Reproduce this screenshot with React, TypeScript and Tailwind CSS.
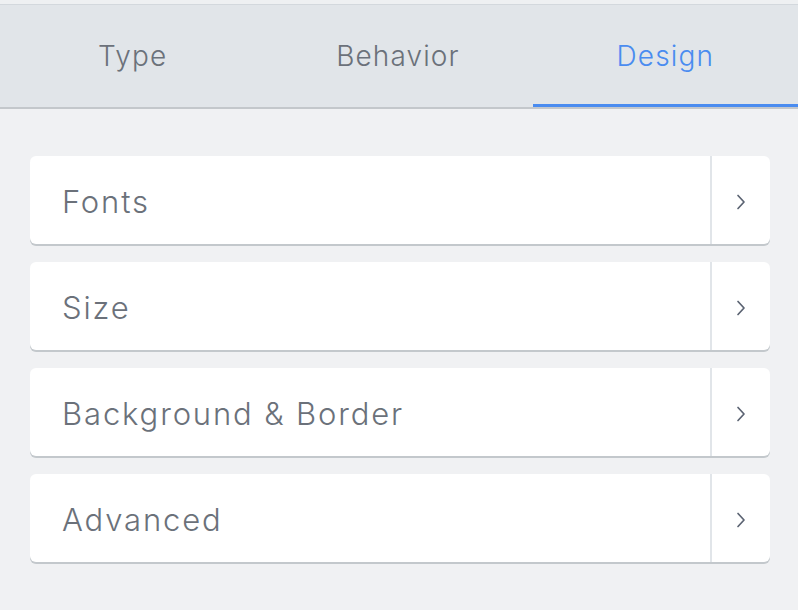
const tabs = ["Type", "Behavior", "Design"];
const sections = ["Fonts", "Size", "Background & Border", "Advanced"];

const Chevron = () => (
  <svg width="12" height="18" viewBox="0 0 12 18" fill="none" className="text-[#5b6372]">
    <path d="M3 2.5 L9 9 L3 15.5" stroke="currentColor" strokeWidth="1.7" strokeLinecap="round" strokeLinejoin="round" />
  </svg>
);

const App = () => {
  return (
    <main
      className="min-h-[610px] w-[798px] bg-[#f0f1f3]"
      style={{ fontFamily: "Inter, 'Noto Sans', sans-serif" }}
    >
      {/* Tabs */}
      <div className="border-t-4 border-[#eef0f2]">
        <div className="flex h-[105px] border-t border-[#d3d8dd] border-b-2 border-b-[#c3c7cb] bg-[#e1e5e9]">
          {tabs.map((tab) => {
            const active = tab === "Design";
            return (
              <div
                key={tab}
                className={
                  active
                    ? "ml-[2px] flex flex-1 items-center justify-center border-b-[3px] border-[#4a8cf0] pt-[2px] text-[28px] font-light tracking-[0.04em] text-[#4a8cf0]"
                    : "flex flex-1 items-center justify-center pb-[1px] text-[28px] font-light tracking-[0.04em] text-[#6b717a]"
                }
              >
                {tab}
              </div>
            );
          })}
        </div>
      </div>

      {/* Section cards */}
      <div className="flex flex-col gap-[18px] pl-[30px] pr-[28px] pt-[47px]">
        {sections.map((label) => (
          <div
            key={label}
            className="flex h-[88px] items-stretch rounded-[6px] bg-white shadow-[0_2px_0_#c3c8cc]"
          >
            <div className="flex flex-1 items-center pl-[32px] pt-[4px] text-[31px] font-light tracking-[0.06em] text-[#6b717a]">
              {label}
            </div>
            <div className="flex w-[60px] items-center justify-center border-l-2 border-[#e1e5e9] pt-1">
              <Chevron />
            </div>
          </div>
        ))}
      </div>
    </main>
  );
};

export default App;
